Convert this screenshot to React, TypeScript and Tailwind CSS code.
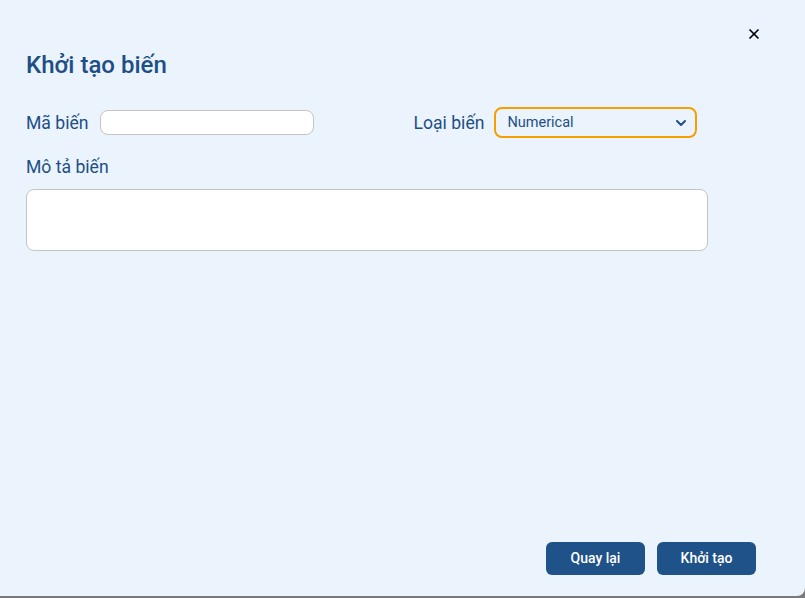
import { ChevronDown, X } from "lucide-react";

export default function App() {
  return (
    <div className="w-[805px] h-[598px] bg-[#7a7a7a] overflow-hidden" style={{ fontFamily: "Roboto, sans-serif" }}>
      <div className="relative flex h-[596px] flex-col rounded-br-lg bg-[#ebf3fd] px-[26px] text-[#1d4e86]">
        {/* Nút đóng */}
        <button className="absolute right-[43px] top-[26px] text-black">
          <X size={16} strokeWidth={2.6} />
        </button>

        <h1 className="mt-[51px] text-[24px] font-medium leading-[28px]">Khởi tạo biến</h1>

        <div className="mt-[28px] flex items-center">
          <div className="flex items-center">
            <label className="text-[17.6px] leading-5">Mã biến</label>
            <input className="ml-[11px] h-[25px] w-[214px] rounded-lg border border-[#c4c4c4] bg-white px-2 outline-none" />
          </div>
          <div className="ml-[100px] flex items-center">
            <label className="text-[17.6px] leading-5">Loại biến</label>
            <div className="ml-[10px] flex h-[31px] w-[203px] items-center justify-between rounded-lg border-2 border-[#f5a000] bg-[#ebf3fd] pl-[11px] pr-[6px]">
              <span className="text-[14.5px]">Numerical</span>
              <ChevronDown size={16} strokeWidth={3} />
            </div>
          </div>
        </div>

        <label className="mt-[19px] text-[17.6px] leading-5">Mô tả biến</label>
        <textarea className="mt-[12px] h-[62px] w-[682px] resize-none rounded-lg border border-[#c4c4c4] bg-white outline-none" />

        <div className="mt-auto mb-[21px] flex justify-end gap-3 pr-[23px]">
          <button className="h-[33px] w-[99px] rounded-md bg-[#1f5289] text-[14px] font-medium text-white">Quay lại</button>
          <button className="h-[33px] w-[99px] rounded-md bg-[#1f5289] text-[14px] font-medium text-white">Khởi tạo</button>
        </div>
      </div>
    </div>
  );
}
